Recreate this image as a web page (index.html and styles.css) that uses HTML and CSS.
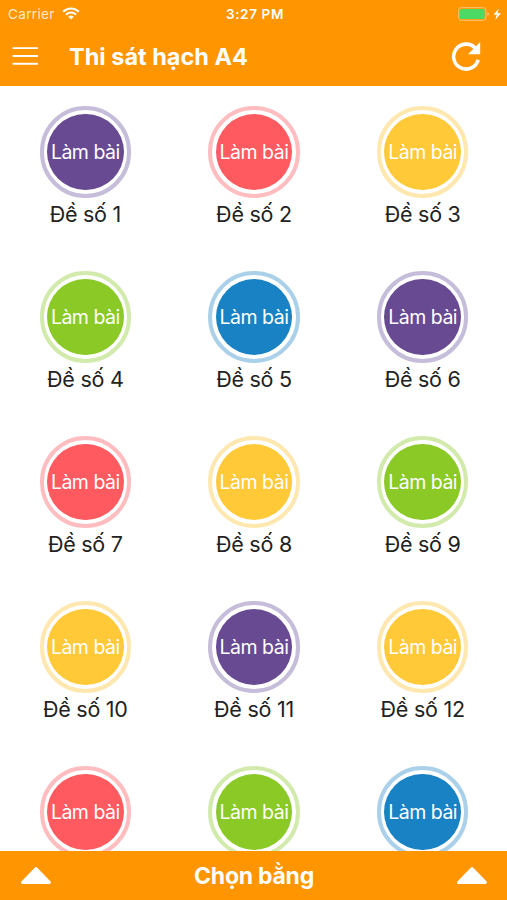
FILE: index.html
```html
<!DOCTYPE html>
<html lang="vi">
<head>
    <meta charset="UTF-8">
    <meta name="viewport" content="width=device-width, initial-scale=1.0">
    <title>Thi sát hạch A4</title>
    <link rel="stylesheet" href="styles.css">
</head>
<body>
    <div class="app">
        <header class="top">
            <div class="status-bar">
                <div class="status-left">
                    <span class="carrier">Carrier</span>
                    <svg class="wifi" viewBox="0 0 18 13" width="18" height="13" fill="none" stroke="#fff"><path d="M1.2 4.8a11 11 0 0 1 15.6 0" stroke-width="2"/><path d="M4 7.7a7 7 0 0 1 10 0" stroke-width="2"/><path d="M9 12.6 6.2 9.8a4 4 0 0 1 5.6 0z" fill="#fff" stroke="none"/></svg>
                </div>
                <span class="clock">3:27 PM</span>
                <div class="status-right">
                    <svg viewBox="0 0 44 14" width="44" height="14"><rect x=".7" y=".7" width="27.2" height="12.6" rx="2.5" fill="none" stroke="#ffc878" stroke-width="1"/><rect x="2" y="2" width="24.6" height="10" rx="1.5" fill="#4cd964"/><path d="M29.4 5v4q1.6-.6 1.6-2t-1.6-2z" fill="#ffc878"/><path d="M40.8 1.5 35.6 7.8h3.2l-1.6 5.2 5.8-6.7h-3.5z" fill="#fff"/></svg>
                </div>
            </div>
            <div class="nav-bar">
                <button class="icon-button menu-button" aria-label="Menu">
                    <svg viewBox="0 0 26 20" width="26" height="20" stroke="#fff" stroke-width="1.9"><path d="M.6 2.1h25.2M.6 10h25.2M.6 17.8h25.2"/></svg>
                </button>
                <h1>Thi sát hạch A4</h1>
                <button class="icon-button reload-button" aria-label="Tải lại">
                    <svg viewBox="0 0 30 30" width="30" height="30"><path d="M24.2 7A12.5 12.5 0 1 0 27.2 18.8" fill="none" stroke="#fff" stroke-width="3.6"/><path d="M29.2 1v12.3H17z" fill="#fff"/></svg>
                </button>
            </div>
        </header>

        <main class="exam-grid" id="examGrid"></main>

        <footer class="bottom-bar">
            <svg viewBox="0 0 32 19" width="32" height="19"><path d="M16 2.5 29.5 16.5H2.5z" fill="#fff" stroke="#fff" stroke-width="3" stroke-linejoin="round"/></svg>
            <span>Chọn bằng</span>
            <svg viewBox="0 0 32 19" width="32" height="19"><path d="M16 2.5 29.5 16.5H2.5z" fill="#fff" stroke="#fff" stroke-width="3" stroke-linejoin="round"/></svg>
        </footer>
    </div>

    <script>
        const examGrid = document.getElementById('examGrid');
        const colors = [
            'purple', 'red', 'yellow',
            'green', 'blue', 'purple',
            'red', 'yellow', 'green',
            'yellow', 'purple', 'yellow',
            'red', 'green', 'blue'
        ];

        colors.forEach((color, index) => {
            const exam = document.createElement('div');
            exam.className = 'exam';

            const button = document.createElement('button');
            button.className = 'exam-button ' + color;
            button.innerHTML = '<span class="exam-disc">Làm bài</span>';
            exam.appendChild(button);

            // hàng cuối bị thanh dưới che nên không cần nhãn
            if (index < 12) {
                const label = document.createElement('div');
                label.className = 'exam-label';
                label.textContent = 'Đề số ' + (index + 1);
                exam.appendChild(label);
            }
            examGrid.appendChild(exam);
        });
    </script>
</body>
</html>
```
FILE: styles.css
```css
:root {
    --font-body: 'Inter', 'Liberation Sans', sans-serif;
    --color-bar: #ff9500;
    --color-text: #222222;
}
* { box-sizing: border-box; }
body {
    margin: 0;
    font-family: var(--font-body);
    color: var(--color-text);
    background-color: #ffffff;
}
button {
    padding: 0;
    border: none;
    background: none;
    font-family: inherit;
    cursor: pointer;
}
svg { display: block; }
.app {
    display: flex;
    flex-direction: column;
    height: 900px;
    overflow: hidden;
}

/* Header */
.top {
    flex: none;
    height: 86px;
    background-color: var(--color-bar);
    color: #ffffff;
}
.status-bar {
    display: grid;
    grid-template-columns: 1fr auto 1fr;
    align-items: center;
    height: 27px;
    padding: 0 5px 0 8px;
    font-size: 13.5px;
}
.status-left {
    display: flex;
    align-items: center;
    gap: 7px;
}
.carrier {
    color: #ffe9c9;
    letter-spacing: 0.35px;
}
.clock {
    font-weight: 600;
    letter-spacing: 0.65px;
}
.status-right {
    display: flex;
    justify-content: flex-end;
}
.nav-bar {
    display: flex;
    align-items: center;
    height: 58px;
    padding: 0 26px 0 12px;
}
.nav-bar h1 {
    flex: 1;
    margin: 0 0 0 31px;
    font-size: 23.5px;
    font-weight: 700;
    white-space: nowrap;
}

/* Exam list */
.exam-grid {
    flex: 1;
    min-height: 0;
    display: grid;
    grid-template-columns: repeat(3, 1fr);
    grid-auto-rows: 165px;
    padding: 20px 0 0 1px;
    overflow: hidden;
}
.exam {
    display: flex;
    flex-direction: column;
    align-items: center;
}
.exam-button {
    flex: none;
    width: 91.5px;
    height: 91.5px;
    padding: 3.5px;
    border: 4px solid var(--ring);
    border-radius: 50%;
}
.exam-disc {
    display: flex;
    align-items: center;
    justify-content: center;
    height: 100%;
    border-radius: 50%;
    background-color: var(--disc);
    color: #ffffff;
    font-size: 19.5px;
    letter-spacing: -0.5px;
    white-space: nowrap;
}
.exam-label {
    font-size: 21.5px;
    line-height: 33px;
    letter-spacing: -0.25px;
}
.purple { --disc: #674a92; --ring: #c5bdd9; }
.red { --disc: #ff5a60; --ring: #ffbdc0; }
.yellow { --disc: #ffc938; --ring: #ffe8b0; }
.green { --disc: #8ac926; --ring: #d2ebac; }
.blue { --disc: #1982c4; --ring: #abd1ea; }

/* Bottom bar */
.bottom-bar {
    flex: none;
    display: flex;
    align-items: center;
    justify-content: space-between;
    height: 49px;
    padding: 0 19px 0 20px;
    background-color: var(--color-bar);
    color: #ffffff;
    font-size: 23px;
    font-weight: 700;
    letter-spacing: -0.25px;
}
```
